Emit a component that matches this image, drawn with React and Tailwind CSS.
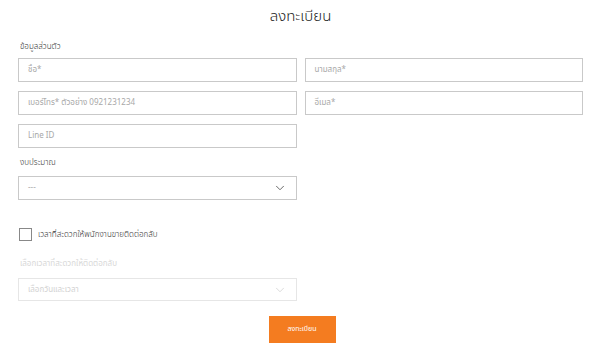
import React from 'react';
import { ChevronDown } from 'lucide-react';

const font = { fontFamily: '"Noto Sans Thai", "Noto Sans", "DejaVu Sans", sans-serif' };

const Field = ({ placeholder }) => (
    <div className="h-6 border border-[#c9c9c9] flex items-center px-[9px] text-[8px] text-[#a8a8a8]">
        {placeholder}
    </div>
);

export default function App() {
    return (
        <div className="w-[600px] h-[352px] bg-white pl-[18px] pr-[17px] text-[#333]" style={font}>
            <h1 className="text-center text-[15px] font-light leading-none pt-[9px] text-[#222]">ลงทะเบียน</h1>

            <p className="text-[8px] font-light mt-[17px] ml-[2px] text-[#333]">ข้อมูลส่วนตัว</p>

            <div className="grid grid-cols-2 gap-x-2 gap-y-[9px] mt-[5px]">
                <Field placeholder="ชื่อ*" />
                <Field placeholder="นามสกุล*" />
                <Field placeholder="เบอร์โทร* ตัวอย่าง 0921231234" />
                <Field placeholder="อีเมล*" />
                <Field placeholder="Line ID" />
            </div>

            <p className="text-[8px] font-light mt-[9px] ml-[2px] text-[#333]">งบประมาณ</p>
            <div className="w-[279px] mt-[7px] h-6 border border-[#c9c9c9] flex items-center justify-between px-[9px] text-[8px] text-[#aaa]">
                <span>---</span>
                <ChevronDown size={14} strokeWidth={1.5} className="text-[#555]" />
            </div>

            <label className="flex items-center gap-[6px] mt-[28px] ml-[1px]">
                <span className="w-[13px] h-[13px] border border-[#888] bg-white" />
                <span className="text-[8px] font-light text-[#333]">เวลาที่สะดวกให้พนักงานขายติดต่อกลับ</span>
            </label>

            <p className="text-[8px] mt-[17px] ml-[2px] text-[#d8d8d8]">เลือกเวลาที่สะดวกให้ติดต่อกลับ</p>
            <div className="w-[279px] mt-[8px] h-[23px] border border-[#e6e6e6] flex items-center justify-between px-[9px] text-[8px] text-[#d3d3d3]">
                <span>เลือกวันและเวลา</span>
                <ChevronDown size={14} strokeWidth={1.2} className="text-[#ccc]" />
            </div>

            <div className="flex justify-center mt-[15px]">
                <button className="w-[67px] h-[27px] bg-[#f47c20] text-white text-[7px] ml-[3px]">ลงทะเบียน</button>
            </div>
        </div>
    );
}
